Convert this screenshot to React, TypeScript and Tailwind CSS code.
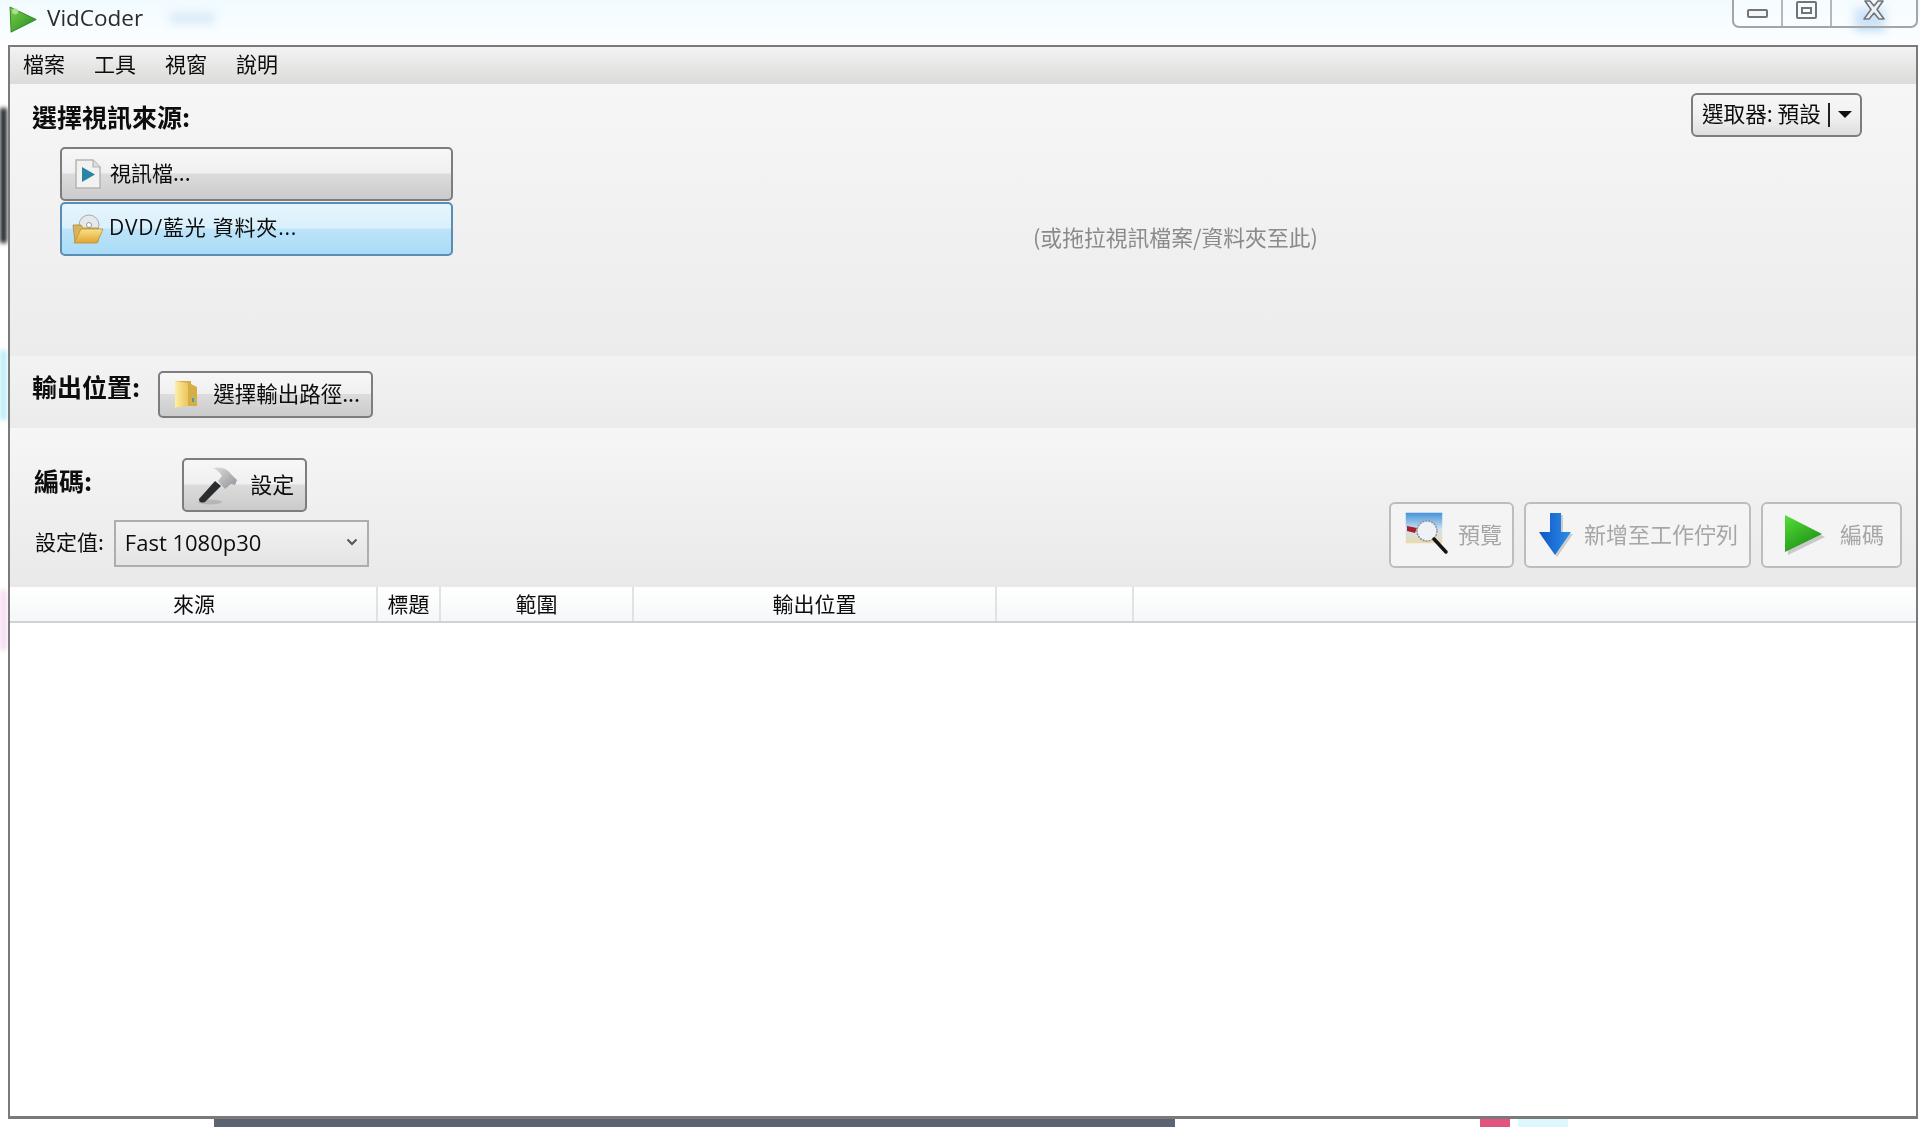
import React from 'react';

const CJK = "font-['Noto_Sans_CJK_TC','Noto_Sans',sans-serif]";
const LATIN_CJK = "font-['Open_Sans','Noto_Sans_CJK_TC',sans-serif]";

// --- ICONS ---
const AppIcon = () => (
  <svg width="29" height="29" viewBox="0 0 28 28">
    <defs>
      <linearGradient id="appG" x1="0" y1="0" x2="1" y2="1">
        <stop offset="0" stopColor="#7ed04a" />
        <stop offset="1" stopColor="#1f8a1f" />
      </linearGradient>
    </defs>
    <path d="M2 3 L27 15 L3 27 Z" fill="url(#appG)" stroke="#3c8a2a" strokeWidth="1" strokeLinejoin="round" />
    <circle cx="7" cy="7" r="3" fill="#b9e6a8" opacity="0.8" />
  </svg>
);

const DocPlayIcon = () => (
  <svg width="28" height="32" viewBox="0 0 28 32">
    <path d="M2 2 H19 L26 9 V30 H2 Z" fill="#f2f2f0" stroke="#b5b5b0" strokeWidth="1.5" />
    <path d="M19 2 V9 H26" fill="#dcdcd8" stroke="#b5b5b0" strokeWidth="1.2" />
    <path d="M8 9 L21 16.5 L8 24 Z" fill="#2a84a8" />
  </svg>
);

const DiscFolderIcon = () => (
  <svg width="32" height="30" viewBox="0 0 32 30">
    <defs>
      <linearGradient id="fold1" x1="0" y1="0" x2="0" y2="1">
        <stop offset="0" stopColor="#fbe08a" />
        <stop offset="1" stopColor="#e0a52e" />
      </linearGradient>
    </defs>
    <circle cx="17" cy="11" r="10" fill="#e6e8ea" stroke="#a9acb2" />
    <circle cx="17" cy="11" r="2.5" fill="#fff" stroke="#999" />
    <path d="M1 11 H9 L11 14 H26 V28 H3 Z" fill="#d9b35a" stroke="#a78a45" strokeWidth="0.8" />
    <path d="M9 15 H31 L25 29 H2 Z" fill="url(#fold1)" stroke="#b98f35" strokeWidth="0.8" />
  </svg>
);

const FolderIcon = () => (
  <svg width="26" height="30" viewBox="1 0 24 30">
    <defs>
      <linearGradient id="fold2" x1="0" y1="0" x2="1" y2="0">
        <stop offset="0" stopColor="#fdeea6" />
        <stop offset="1" stopColor="#ecc65a" />
      </linearGradient>
    </defs>
    <path d="M2 2 H18 V5 L24 8 V27 H12 L2 29 Z" fill="#d6ae48" />
    <path d="M2 2 L15 4 V27 L2 29 Z" fill="url(#fold2)" />
    <rect x="19" y="19" width="2" height="4" fill="#3fa0a8" />
  </svg>
);

const HammerIcon = () => (
  <svg width="44" height="42" viewBox="0 0 44 42">
    <defs>
      <linearGradient id="head" x1="0" y1="0" x2="1" y2="1">
        <stop offset="0" stopColor="#dcdedf" />
        <stop offset="1" stopColor="#8f9295" />
      </linearGradient>
    </defs>
    <ellipse cx="13" cy="38" rx="12" ry="2.5" fill="#000" opacity="0.12" />
    <path d="M2 35 L18 17 L24 22 L8 38 Q2 40 2 35 Z" fill="#2a2c2e" />
    <path d="M16 4 Q28 2 34 10 L40 16 L38 21 L34 20 L28 25 L21 17 L25 12 Q22 7 16 4 Z" fill="url(#head)" />
  </svg>
);

const PreviewIcon = () => (
  <svg width="46" height="48" viewBox="0 0 46 48">
    <defs>
      <linearGradient id="sky" x1="0" y1="0" x2="0" y2="1">
        <stop offset="0" stopColor="#3f8fd8" />
        <stop offset="0.55" stopColor="#cfe3f2" />
        <stop offset="1" stopColor="#ecd9a8" />
      </linearGradient>
    </defs>
    <rect x="1" y="1" width="38" height="32" fill="url(#sky)" stroke="#f4f4f4" strokeWidth="1.5" />
    <path d="M3 15 L13 17 L11 22 L3 20 Z" fill="#a8202c" />
    <circle cx="23" cy="20" r="10" fill="#eef2f6" stroke="#8d9196" strokeWidth="1.5" strokeDasharray="2 1" />
    <path d="M30 28 L42 41" stroke="#141414" strokeWidth="3.5" strokeLinecap="round" />
  </svg>
);

const DownArrowIcon = () => (
  <svg width="36" height="46" viewBox="0 0 36 46">
    <defs>
      <linearGradient id="arrowB" x1="0" y1="0" x2="1" y2="0">
        <stop offset="0" stopColor="#0b57c8" />
        <stop offset="1" stopColor="#2f8de6" />
      </linearGradient>
    </defs>
    <path d="M13 3 H25 V22 H35 L19 45 L3 24 H13 Z" fill="#999" opacity="0.45" />
    <path d="M12 1 H23 V20 H33 L17 43 L1 20 H12 Z" fill="url(#arrowB)" />
  </svg>
);

const GreenPlayIcon = () => (
  <svg width="44" height="42" viewBox="0 0 44 42">
    <defs>
      <linearGradient id="playG" x1="0" y1="0" x2="0.6" y2="1">
        <stop offset="0" stopColor="#54e03a" />
        <stop offset="1" stopColor="#1f8f16" />
      </linearGradient>
    </defs>
    <path d="M4 3 L42 23 L5 41 Z" fill="#777" opacity="0.35" />
    <path d="M2 1 L39 20 L2 38 Z" fill="url(#playG)" />
  </svg>
);

// --- SMALL PARTS ---
const silver =
  'bg-[linear-gradient(#f7f7f7_0%,#f0f0f0_48%,#dcdcdc_50%,#cbcbcb_100%)] border-2 border-[#7d7d7d] rounded-[5px]';

const ActionButton = ({ w, gap, pl, label, icon }: { w: string; gap: string; pl: string; label: string; icon: React.ReactNode }) => (
  <button className={`${w} ${gap} ${pl} h-[66px] flex items-center rounded-[6px] border-2 border-[#bdbdbd] bg-[#f4f4f4] text-[22px] text-[#a6a6a6]`}>
    {icon}
    <span className="-mt-[3px]">{label}</span>
  </button>
);

export default function App() {
  return (
    <div className={`${CJK} relative w-[1920px] h-[1127px] overflow-hidden flex flex-col bg-[linear-gradient(#f1fbff_0%,#ffffff_5%)] text-[#0d0d0d] blur-[0.5px]`}>
      {/* desktop showing through behind the window */}
      <div className="absolute left-0 top-[108px] w-[7px] h-[135px] bg-[#23272c] blur-[2px]" />
      <div className="absolute left-0 top-[350px] w-[7px] h-[70px] bg-[#bfeefb] blur-[2px]" />
      <div className="absolute left-0 top-[590px] w-[7px] h-[60px] bg-[#f6dcf2] blur-[2px]" />
      <div className="absolute left-[170px] top-[12px] w-[45px] h-[12px] bg-[#dcebf8] blur-[4px]" />
      <div className="absolute left-[1855px] top-[8px] w-[30px] h-[22px] bg-[#b5d5f3] blur-[5px]" />

      {/* --- TITLE BAR --- */}
      <header className="relative h-[45px] shrink-0 flex items-start pl-[8px] pt-[4px]">
        <AppIcon />
        <span className="ml-[10px] text-[22.5px] leading-[28px] font-['Open_Sans',sans-serif] text-[#2b2b2b]">VidCoder</span>
        <div className="ml-auto mr-[2px] -mt-[4px] flex h-[28px] w-[186px] rounded-b-[7px] border-2 border-t-0 border-[#a3a6a9] bg-white/30">
          <div className="w-[49px] border-r-2 border-[#b5b8ba] flex justify-center pt-[9px]">
            <div className="w-[21px] h-[9px] rounded-[2px] border-2 border-[#70757a] bg-[#f4f6f7]" />
          </div>
          <div className="w-[49px] border-r-2 border-[#b5b8ba] flex justify-center pt-[1px]">
            <div className="w-[21px] h-[18px] rounded-[2px] border-2 border-[#70757a] flex items-center justify-center">
              <div className="w-[11px] h-[7px] border-2 border-[#70757a]" />
            </div>
          </div>
          <div className="flex-1 flex justify-center">
            <svg width="24" height="21" viewBox="0 0 24 21">
              <path d="M3 1 H8 L12 6 L16 1 H21 L15 9.5 L22 19 H17 L12 13 L7 19 H2 L9 9.5 Z" fill="#eef2f5" stroke="#70757a" strokeWidth="1.6" strokeLinejoin="round" />
            </svg>
          </div>
        </div>
      </header>

      {/* --- WINDOW --- */}
      <div className="relative ml-[8px] mr-[2px] h-[1074px] shrink-0 flex flex-col border-2 border-b-[3px] border-[#7a7a7a] bg-white">
        {/* menu */}
        <nav className="h-[37px] shrink-0 flex items-center gap-[29px] pl-[13px] pb-[4px] text-[21px] bg-[linear-gradient(#f3f3f3,#dcdbda)]">
          <span>檔案</span>
          <span>工具</span>
          <span>視窗</span>
          <span>說明</span>
        </nav>

        {/* source section */}
        <section className="h-[272px] shrink-0 flex bg-[linear-gradient(#f6f6f6,#ececec)]">
          <div className="w-[442px] shrink-0 pl-[22px] pt-[18px]">
            <h2 className="text-[25px] leading-[28px] font-bold">選擇視訊來源:</h2>
            <div className="ml-[28px] mt-[17px] flex flex-col gap-px">
              <button className={`${silver} h-[54px] w-[393px] flex items-center pl-[12px] gap-[8px] text-[21px]`}>
                <DocPlayIcon />
                <span className="-mt-[2px]">視訊檔...</span>
              </button>
              <button className="h-[54px] w-[393px] flex items-center pl-[10px] gap-[5px] text-[21px] rounded-[5px] border-2 border-[#5b8db3] bg-[linear-gradient(#e6f5fd_0%,#d9f0fc_48%,#bde4f9_50%,#a9dbf7_100%)]">
                <DiscFolderIcon />
                <span className={`${LATIN_CJK} -mt-[2px] tracking-[0.8px]`}>DVD/藍光 資料夾...</span>
              </button>
            </div>
          </div>
          <p className="ml-[581px] mt-[139px] text-[21.8px] leading-[28px] text-[#8a8a8a] whitespace-nowrap">(或拖拉視訊檔案/資料夾至此)</p>
          <div className="ml-auto mr-[54px] mt-[9px]">
            <button className="h-[44px] w-[171px] flex items-center pl-[9px] pb-[4px] text-[21.6px] rounded-[6px] border-2 border-[#7d7d7d] bg-[linear-gradient(#f7f7f7_0%,#f0f0f0_55%,#dedede_100%)]">
              <span>選取器: 預設</span>
              <span className="ml-[7px] w-[2px] h-[24px] bg-[#222] mt-[3px]" />
              <span className="ml-[8px] mt-[3px] w-0 h-0 border-x-[7px] border-x-transparent border-t-[7px] border-t-[#111]" />
            </button>
          </div>
        </section>

        {/* output section */}
        <section className="h-[72px] shrink-0 flex items-start pl-[22px] pt-[15px] bg-[linear-gradient(#f3f3f3,#ebebeb)]">
          <h2 className="text-[25px] leading-[30px] font-bold">輸出位置:</h2>
          <button className={`${silver} ml-[18px] h-[47px] w-[215px] flex items-center pl-[13px] pb-[2px] gap-[14px] text-[21.5px]`}>
            <FolderIcon />
            <span>選擇輸出路徑...</span>
          </button>
        </section>

        {/* encoding section */}
        <section className="h-[159px] shrink-0 flex justify-between bg-[linear-gradient(#f6f6f6,#e9e9e9)]">
          <div className="pl-[24px] pt-[30px]">
            <div className="flex items-start">
              <h2 className="text-[25px] leading-[30px] font-bold mt-[7px]">編碼:</h2>
              <button className={`${silver} ml-[90px] h-[54px] w-[125px] flex items-center pl-[13px] gap-[9px] text-[22px]`}>
                <HammerIcon />
                <span className="-mt-[4px]">設定</span>
              </button>
            </div>
            <div className="mt-[8px] flex items-center">
              <label className="ml-px text-[21px] -mt-[4px]">設定值:</label>
              <div className="ml-[10px] h-[47px] w-[255px] flex items-center justify-between pl-[9px] pr-[9px] border-2 border-[#adadad] bg-[linear-gradient(#f2f2f2,#e4e4e4)]">
                <span className="text-[22px] -mt-[2px] font-['Open_Sans',sans-serif]">Fast 1080p30</span>
                <svg width="12" height="8" viewBox="0 0 12 8" className="-mt-[4px]">
                  <path d="M1.5 1.5 L6 6 L10.5 1.5" fill="none" stroke="#555" strokeWidth="2" />
                </svg>
              </div>
            </div>
          </div>
          <div className="flex items-end gap-[10px] pr-[14px] pb-[19px]">
            <ActionButton w="w-[125px]" gap="gap-[8px]" pl="pl-[13px]" label="預覽" icon={<PreviewIcon />} />
            <ActionButton w="w-[227px]" gap="gap-[10px]" pl="pl-[12px]" label="新增至工作佇列" icon={<DownArrowIcon />} />
            <ActionButton w="w-[141px]" gap="gap-[13px]" pl="pl-[20px]" label="編碼" icon={<GreenPlayIcon />} />
          </div>
        </section>

        {/* queue table */}
        <div className="h-[36px] shrink-0 flex items-center text-[21px] border-b-2 border-[#d2d2d2] bg-[linear-gradient(#ffffff,#f5f7f9)]">
          <div className="w-[368px] h-full flex items-center justify-center border-r-2 border-[#e2e2e2] pl-[2px]">來源</div>
          <div className="w-[63px] h-full flex items-center justify-center border-r-2 border-[#e2e2e2]">標題</div>
          <div className="w-[193px] h-full flex items-center justify-center border-r-2 border-[#e2e2e2]">範圍</div>
          <div className="w-[363px] h-full flex items-center justify-center border-r-2 border-[#e2e2e2]">輸出位置</div>
          <div className="w-[137px] h-full border-r-2 border-[#e2e2e2]" />
        </div>
        <div className="flex-1 bg-white" />
      </div>

      {/* desktop strip below the window */}
      <div className="flex-1 flex">
        <div className="ml-[214px] w-[961px] bg-[#5b6473]" />
        <div className="ml-[305px] w-[30px] bg-[#e2557f]" />
        <div className="ml-[8px] w-[50px] bg-[#dcf7fd]" />
      </div>
    </div>
  );
}
